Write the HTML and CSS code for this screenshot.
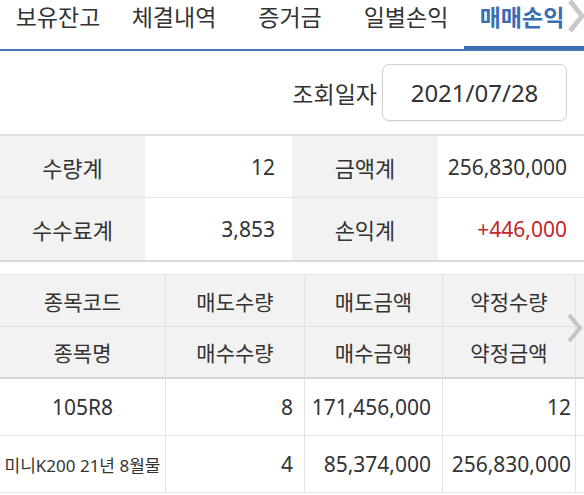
FILE: index.html
```html
<!DOCTYPE html>
<html lang="ko">
<head>
<meta charset="utf-8">
<link rel="stylesheet" href="styles.css">
</head>
<body>
<div class="tabs">
  <div class="tab">보유잔고</div>
  <div class="tab">체결내역</div>
  <div class="tab">증거금</div>
  <div class="tab">일별손익</div>
  <div class="tab active">매매손익</div>
  <svg class="tab-arrow" width="20" height="34" viewBox="0 0 20 34"><path d="M4 2 L16 17 L4 32" fill="none" stroke="#c9c9c9" stroke-width="5"/></svg>
</div>
<div class="query">
  <span class="query-label">조회일자</span>
  <div class="date-box">2021/07/28</div>
</div>
<div class="summary">
  <div class="s-label">수량계</div>
  <div class="s-value">12</div>
  <div class="s-label">금액계</div>
  <div class="s-value">256,830,000</div>
  <div class="s-label last">수수료계</div>
  <div class="s-value last">3,853</div>
  <div class="s-label last">손익계</div>
  <div class="s-value last red">+446,000</div>
</div>
<div class="list">
  <div class="h">종목코드</div>
  <div class="h">매도수량</div>
  <div class="h">매도금액</div>
  <div class="h">약정수량</div>
  <div class="h pad"></div>
  <div class="h h2">종목명</div>
  <div class="h h2">매수수량</div>
  <div class="h h2">매수금액</div>
  <div class="h h2">약정금액</div>
  <div class="h h2 pad"></div>
  <div class="d c">105R8</div>
  <div class="d r">8</div>
  <div class="d r">171,456,000</div>
  <div class="d r last">12</div>
  <div class="d pad"></div>
  <div class="d c small">미니K200 21년 8월물</div>
  <div class="d r">4</div>
  <div class="d r">85,374,000</div>
  <div class="d r last">256,830,000</div>
  <div class="d pad"></div>
  <svg class="list-arrow" width="18" height="30" viewBox="0 0 18 30"><path d="M3 2 L14 15 L3 28" fill="none" stroke="#c4c4c4" stroke-width="4"/></svg>
</div>
</body>
</html>
```
FILE: styles.css
```css
html, body {
  margin: 0;
  padding: 0;
  background: #fff;
}
body {
  width: 584px;
  font-family: "Noto Sans", "Noto Sans CJK KR", sans-serif;
  color: #333;
  overflow: hidden;
}
.tabs {
  position: relative;
  display: flex;
  height: 49px;
  border-bottom: 2px solid #4677b6;
  overflow: hidden;
}
.tab {
  width: 116px;
  flex: none;
  text-align: center;
  font-size: 23px;
  line-height: 34px;
  color: #333;
}
.tab.active {
  width: 120px;
  color: #3b6db3;
  font-weight: 700;
  box-shadow: inset 0 -3px 0 #3b6db3;
  padding-right: 4px;
  box-sizing: border-box;
}
.tab-arrow {
  position: absolute;
  right: -2px;
  top: -1px;
}
.query {
  height: 83px;
  display: flex;
  align-items: center;
  justify-content: flex-end;
  gap: 5px;
  padding-right: 17px;
}
.query-label {
  font-size: 23px;
}
.date-box {
  width: 185px;
  height: 57px;
  box-sizing: border-box;
  border: 1px solid #cfcfcf;
  border-radius: 7px;
  box-shadow: 0 1px 1px rgba(0,0,0,0.06);
  display: flex;
  align-items: center;
  justify-content: center;
  font-size: 24px;
}
.summary {
  display: grid;
  grid-template-columns: 145px 147px 146px 146px;
  border-top: 2px solid #e0e0e0;
  border-bottom: 2px solid #dadada;
}
.s-label, .s-value {
  height: 61px;
  display: flex;
  align-items: center;
  font-size: 21px;
  border-bottom: 1px solid #e6e6e6;
}
.s-label.last, .s-value.last {
  border-bottom: none;
  height: 62px;
}
.s-label {
  background: #f2f2f2;
  justify-content: center;
  font-size: 22px;
}
.s-value {
  justify-content: flex-end;
  padding-right: 17px;
}
.red {
  color: #c3262b;
}
.list {
  position: relative;
  margin-top: 12px;
  display: grid;
  grid-template-columns: 166px 139px 138px 133px 8px;
  border-top: 1px solid #e6e6e6;
}
.h, .d {
  display: flex;
  align-items: center;
  box-sizing: border-box;
  border-right: 1px solid #e2e2e2;
}
.pad {
  border-right: none;
}
.h {
  height: 52px;
  background: #f2f2f2;
  justify-content: center;
  font-size: 21px;
  border-bottom: 1px solid #e0e0e0;
}
.h.h2 {
  height: 52px;
  border-bottom: 2px solid #d6d6d6;
}
.d {
  height: 57px;
  font-size: 21px;
  border-bottom: 1px solid #e6e6e6;
}
.d.c {
  justify-content: center;
}
.d.r {
  justify-content: flex-end;
  padding-right: 11px;
}
.d.r.last {
  padding-right: 4px;
}
.small {
  font-size: 17px;
}
.list-arrow {
  position: absolute;
  left: 566px;
  top: 38px;
}
```
